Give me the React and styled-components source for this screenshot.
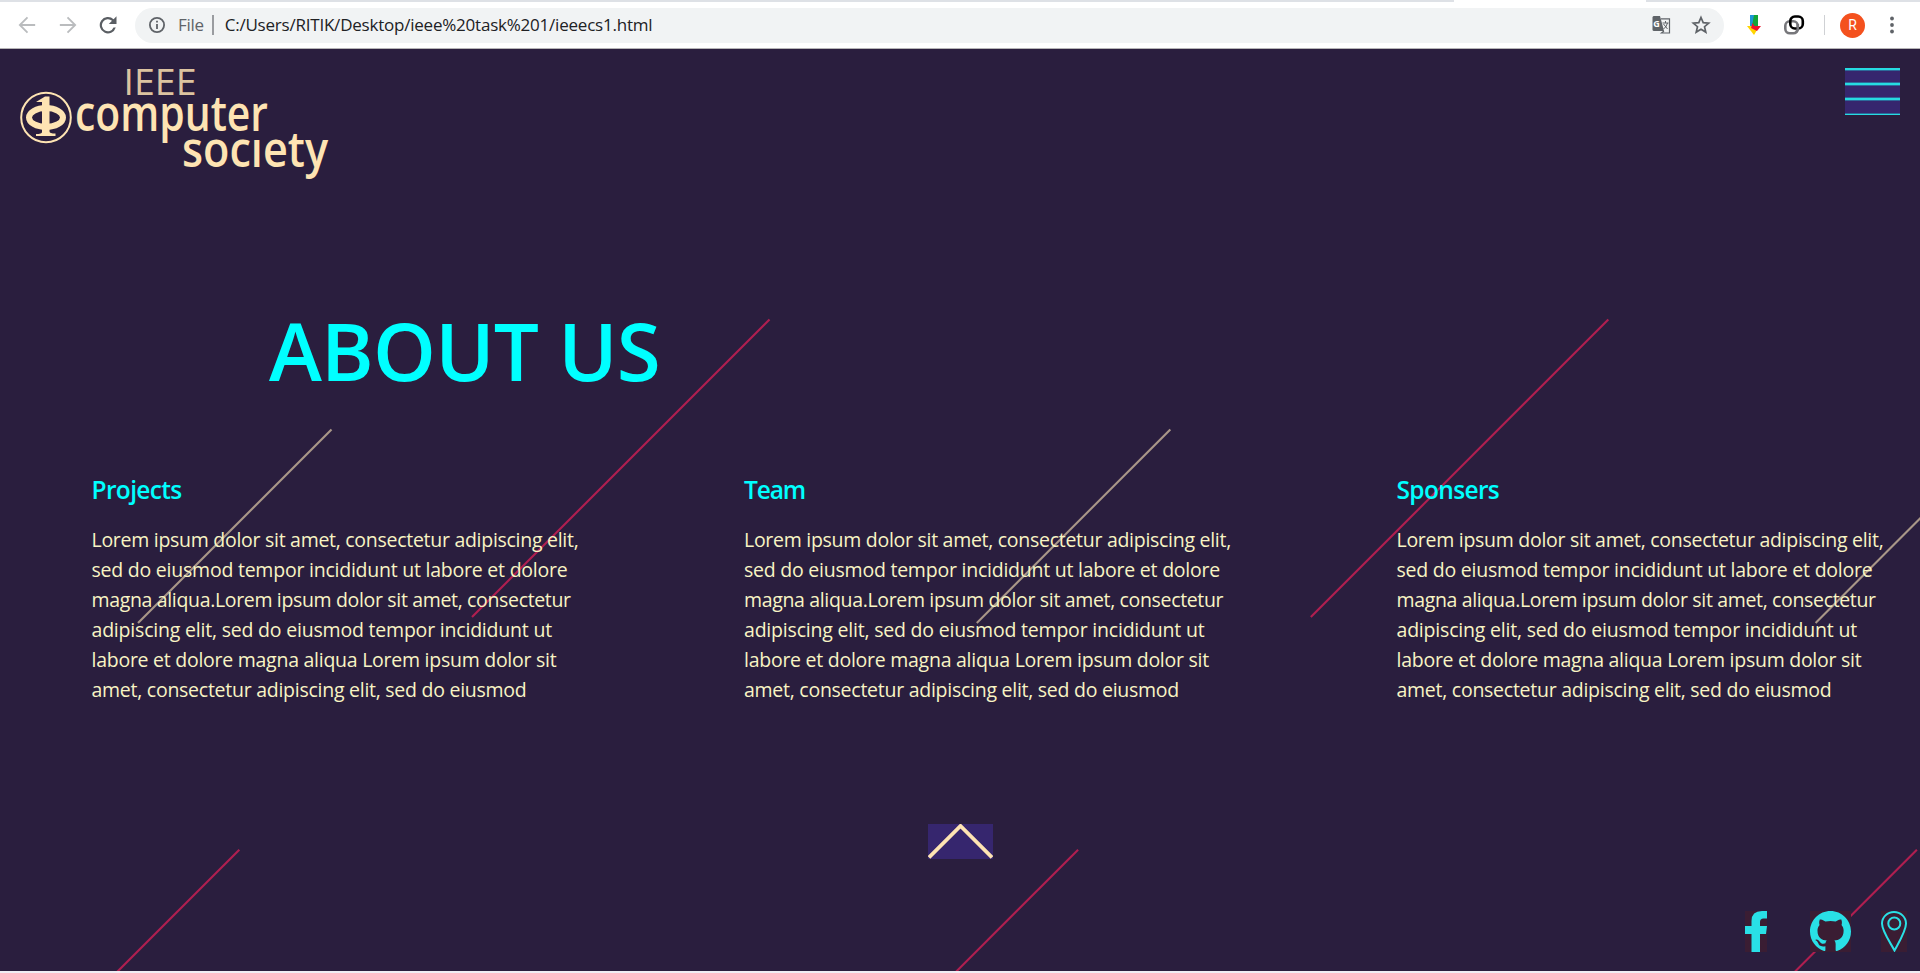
import React from "react";
import styled, { createGlobalStyle } from "styled-components";

const Global = createGlobalStyle`
  * { box-sizing: border-box; }
  html, body { margin: 0; padding: 0; background: #f0edf4; overflow: hidden; }
`;

const Window = styled.div`
  width: 1920px;
  height: 973px;
  display: flex;
  flex-direction: column;
  font-family: "Open Sans", "Noto Sans", sans-serif;
`;

const TabEdge = styled.div`
  height: 2px;
  background: linear-gradient(90deg, #dee1e6 1454px, #fff 1454px, #fff 1646px, #dee1e6 1646px);
`;

const Toolbar = styled.header`
  height: 47px;
  display: flex;
  align-items: center;
  background: #fff;
  border-bottom: 1px solid #b6b4b6;
`;

const NavButtons = styled.div`
  width: 135px;
  display: flex;
  align-items: center;
  gap: 17px;
  padding-left: 16px;
`;

const AddressBar = styled.div`
  width: 1589px;
  height: 35px;
  border-radius: 18px;
  background: #f1f3f4;
  display: flex;
  align-items: center;
  padding: 0 13px 0 13px;
`;

const Scheme = styled.span`
  margin-left: 12px;
  font-size: 17px;
  line-height: 24px;
  letter-spacing: -0.3px;
  color: #5f6368;
`;

const Divider = styled.i`
  width: ${(p) => p.$w || 1}px;
  height: 20px;
  background: ${(p) => p.$color};
  margin: 0 ${(p) => p.$right}px 0 ${(p) => p.$left}px;
`;

const Url = styled.span`
  flex: 1;
  font-size: 17px;
  line-height: 24px;
  letter-spacing: -0.22px;
  color: #202124;
`;

const BarActions = styled.div`
  display: flex;
  align-items: center;
  gap: 20px;
`;

const Extensions = styled.div`
  display: flex;
  align-items: center;
  padding-left: 22px;
`;

const LinkIcon = styled.svg`
  margin-left: 21px;
`;

const MenuDots = styled.svg`
  margin-left: 25px;
`;

const Avatar = styled.span`
  width: 25px;
  height: 25px;
  border-radius: 50%;
  background: #f4511e;
  color: #fff;
  font: 14px/25px Roboto, sans-serif;
  text-align: center;
`;

const Page = styled.main`
  position: relative;
  height: 922px;
  background: #2a1e3e;
  display: flex;
  flex-direction: column;
`;

const Stripes = styled.svg`
  position: absolute;
  inset: 0;
`;

const Header = styled.div`
  position: relative;
  display: flex;
  justify-content: space-between;
  padding: 19px 20px 0 20px;
  height: 249px;
`;

const LogoArt = styled.svg`
  overflow: visible;
`;

const Title = styled.h1`
  position: relative;
  margin: 0 0 0 269px;
  height: 174px;
  font-size: 80px;
  line-height: 104px;
  font-weight: 600;
  letter-spacing: -0.8px;
  color: #0ff;
`;

const Columns = styled.section`
  position: relative;
  display: flex;
  gap: 152.5px;
  padding-left: 91.5px;
  height: 352px;
`;

const Column = styled.article`
  width: 500px;
  flex: none;
`;

const Heading = styled.h2`
  margin: 0 0 16.5px;
  font-size: 24.5px;
  line-height: 36px;
  font-weight: 600;
  letter-spacing: ${(p) => p.$ls}px;
  color: #0ff;
`;

const Copy = styled.p`
  margin: 0;
  font-size: 19.5px;
  line-height: 30px;
  color: #f8f4c4;
  white-space: nowrap;
`;

const Line = styled.span`
  display: block;
  letter-spacing: ${(p) => p.$ls}px;
`;

const UpRow = styled.div`
  position: relative;
  display: flex;
  justify-content: center;
  height: 87px;
`;

const Social = styled.footer`
  position: relative;
  display: flex;
  justify-content: flex-end;
  padding-right: 13px;
`;

const IconTile = styled.svg`
  background: #3a1d33;
  margin-left: ${(p) => p.$gap}px;
`;

const Back = ({ flip }) => (
  <svg width="23" height="24" viewBox="0 0 24 24" fill="none" stroke="#babcbe" strokeWidth="1.9" transform={flip ? "scale(-1 1)" : undefined}>
    <path d="M20 12H4.5M12 4L4 12l8 8" />
  </svg>
);

const Logo = () => (
  <LogoArt width="312" height="115" viewBox="20 68 312 115" fill="#fee4b3" fontFamily='"Open Sans", sans-serif'>
    <circle cx="46" cy="117.500" r="24.800" fill="none" stroke="#fee4b3" strokeWidth="2" />
    <ellipse cx="46" cy="117.500" rx="17" ry="9.500" fill="none" stroke="#fee4b3" strokeWidth="6" />
    <path d="M36 102l9-5.500h4.500v35q0 2 6 2v2.500H36V134q6 0 6-2v-30z" />
    <text x="123.500" y="94.500" fontSize="36.500" fontWeight="400" fill="#dcc3a0" textLength="73" lengthAdjust="spacingAndGlyphs">IEEE</text>
    <text x="75" y="130.500" fontSize="49" fontWeight="600" textLength="193" lengthAdjust="spacingAndGlyphs">computer</text>
    <text x="182" y="167" fontSize="49" fontWeight="600" textLength="146" lengthAdjust="spacingAndGlyphs">socıety</text>
  </LogoArt>
);

const lines = [
  ["Lorem ipsum dolor sit amet, consectetur adipiscing elit,", -0.28],
  ["sed do eiusmod tempor incididunt ut labore et dolore", -0.23],
  ["magna aliqua.Lorem ipsum dolor sit amet, consectetur", -0.34],
  ["adipiscing elit, sed do eiusmod tempor incididunt ut", -0.2],
  ["labore et dolore magna aliqua Lorem ipsum dolor sit", -0.26],
  ["amet, consectetur adipiscing elit, sed do eiusmod", -0.26],
];

const columns = [
  ["Projects", -0.65],
  ["Team", -1.1],
  ["Sponsers", -0.65],
];

export default function App() {
  return (
    <Window>
      <Global />
      <TabEdge />
      <Toolbar>
        <NavButtons>
          <Back />
          <Back flip />
          <svg width="24" height="24" viewBox="0 0 24 24" fill="#5a5e63">
            <path d="M17.600 6.200A8.200 8.200 0 1 0 19.800 14.500h-2.300A6 6 0 1 1 16 7.800L12.800 11H20.500V3.300z" />
          </svg>
        </NavButtons>
        <AddressBar>
          <svg width="18" height="18" viewBox="0 0 18 18">
            <circle cx="9" cy="9" r="7.100" fill="none" stroke="#5f6368" strokeWidth="1.800" />
            <path d="M8.100 8h1.800v5H8.100zM8.100 4.800h1.800v1.800H8.100z" fill="#5f6368" />
          </svg>
          <Scheme>File</Scheme>
          <Divider $color="#9a9ca0" $left={8} $right={11} $w={2} />
          <Url>C:/Users/RITIK/Desktop/ieee%20task%201/ieeecs1.html</Url>
          <BarActions>
            <svg width="20" height="20" viewBox="0 0 20 20">
              <path d="M2.500 1H9l4 15H3a1.500 1.500 0 0 1-1.500-1.500V2z" fill="#5f6368" />
              <path d="M10 3.800h8.500V18H10.500l2.500-2" fill="none" stroke="#5f6368" strokeWidth="1.200" />
              <path d="M11.500 8h6M14.500 6v2M12.500 9l4 5M16.500 8q-1 4-4 6" fill="none" stroke="#5f6368" />
              <text x="2.300" y="11.500" fontSize="9" fontWeight="700" fill="#fff">G</text>
            </svg>
            <svg width="20" height="20" viewBox="0 0 20 20">
              <path d="M10 2.500l2.200 5.100 5.500.5-4.200 3.600 1.300 5.400L10 14.200l-4.800 2.900 1.300-5.400L2.300 8.100l5.500-.5z" fill="none" stroke="#5f6368" strokeWidth="1.700" />
            </svg>
          </BarActions>
        </AddressBar>
        <Extensions>
          <svg width="16" height="20" viewBox="0 0 16 20">
            <path d="M4 0h4v11H4z" fill="#1c96d6" />
            <path d="M8 0h4v11H6z" fill="#12a537" />
            <path d="M1 11h5l5 4-3 5z" fill="#ffd500" />
            <path d="M6.500 8l2 3h6.500l-4 5-6-3z" fill="#f0112b" />
          </svg>
          <LinkIcon width="22" height="20" viewBox="0 0 22 20" fill="none" strokeWidth="2.600">
            <rect x="2.300" y="6.300" width="12.500" height="12" rx="4.500" stroke="#77777b" />
            <rect x="7.300" y="1.500" width="12.500" height="12" rx="4.500" stroke="#000" />
            <path d="M14.800 9v4.800q0 2-2 3.500" stroke="#77777b" />
          </LinkIcon>
          <Divider $color="#cfd1d4" $left={19} $right={15} />
          <Avatar>R</Avatar>
          <MenuDots width="4" height="18" viewBox="0 0 4 18" fill="#5f6368">
            <circle cx="2" cy="2.500" r="1.900" />
            <circle cx="2" cy="9" r="1.900" />
            <circle cx="2" cy="15.500" r="1.900" />
          </MenuDots>
        </Extensions>
      </Toolbar>
      <Page>
        <Stripes width="1920" height="922" viewBox="0 49 1920 922" fill="none" strokeWidth="2.100">
          {[0, 838.8, 1677.6].map((x) => (
            <g key={x} transform={`translate(${x} 0)`}>
              <path d="M769.500 319.500L472 617" stroke="#b01f50" />
              <path d="M331.500 429.500L138 623" stroke="#a99788" />
              <path d="M239.300 849.700L117 972" stroke="#b01f50" />
            </g>
          ))}
        </Stripes>
        <Header>
          <Logo />
          <svg width="55" height="47" viewBox="0 0 55 47">
            <path d="M0 0h55v47H0z" fill="#36266e" />
            <path d="M0 0h55v2H0zM0 15h55v2H0zM0 31h55v1H0zM0 30h55v1H0zM0 46h55v1H0z" fill="#26dbe2" />
            <path d="M0 2h55v1H0zM0 14h55v1H0zM0 17h55v1H0zM0 29h55v1H0zM0 32h55v1H0zM0 45h55v1H0z" fill="#2d6a9a" />
          </svg>
        </Header>
        <Title>ABOUT US</Title>
        <Columns>
          {columns.map(([name, ls]) => (
            <Column key={name}>
              <Heading $ls={ls}>{name}</Heading>
              <Copy>
                {lines.map(([text, spacing]) => (
                  <Line key={text} $ls={spacing}>{text} </Line>
                ))}
              </Copy>
            </Column>
          ))}
        </Columns>
        <UpRow>
          <svg width="65" height="35" viewBox="0 0 65 35">
            <path d="M0 0h65v35H0z" fill="#36266e" />
            <path d="M1 33.500L32.500 2 64 33.500" fill="none" stroke="#fee4b3" strokeWidth="3.800" />
          </svg>
        </UpRow>
        <Social>
          <IconTile width="22" height="41" viewBox="0 0 22 41" fill="#29e0e6">
            <path d="M6.500 41V23H0v-8h6.500V10Q6.500 0 17 0h5v7.500h-3.500q-3.500 0-3.500 3.500v4h7l-1 8h-6v18z" />
          </IconTile>
          <IconTile $gap={43} width="41" height="41" viewBox="0 0 16 16" fill="#29e0e6">
            <path d="M8 0C3.580 0 0 3.580 0 8c0 3.540 2.290 6.530 5.470 7.590.4.070.55-.17.55-.38 0-.19-.01-.82-.01-1.490-2.010.37-2.530-.49-2.690-.94-.09-.23-.48-.94-.82-1.130-.28-.15-.68-.52-.01-.53.63-.01 1.080.58 1.230.82.72 1.210 1.870.87 2.330.66.07-.52.28-.87.51-1.070-1.780-.2-3.640-.89-3.640-3.950 0-.87.31-1.590.82-2.150-.08-.2-.36-1.020.08-2.120 0 0 .67-.21 2.200.82.64-.18 1.320-.27 2-.27s1.360.09 2 .27c1.530-1.040 2.200-.82 2.200-.82.44 1.100.16 1.920.08 2.120.51.56.82 1.270.82 2.150 0 3.070-1.870 3.750-3.650 3.950.29.25.54.73.54 1.480 0 1.070-.01 1.930-.01 2.200 0 .21.15.46.55.38A8.010 8.010 0 0 0 16 8c0-4.420-3.580-8-8-8z" />
          </IconTile>
          <IconTile $gap={30} width="26" height="41" viewBox="0 0 26 41" fill="none" stroke="#29e0e6" strokeWidth="2">
            <path d="M13.500 39.500C9 31 1 20 1 12.500a12 11.500 0 0 1 24 0C25 20 18 31 13.500 39.500z" />
            <circle cx="13.300" cy="12.500" r="6" />
          </IconTile>
        </Social>
      </Page>
    </Window>
  );
}
